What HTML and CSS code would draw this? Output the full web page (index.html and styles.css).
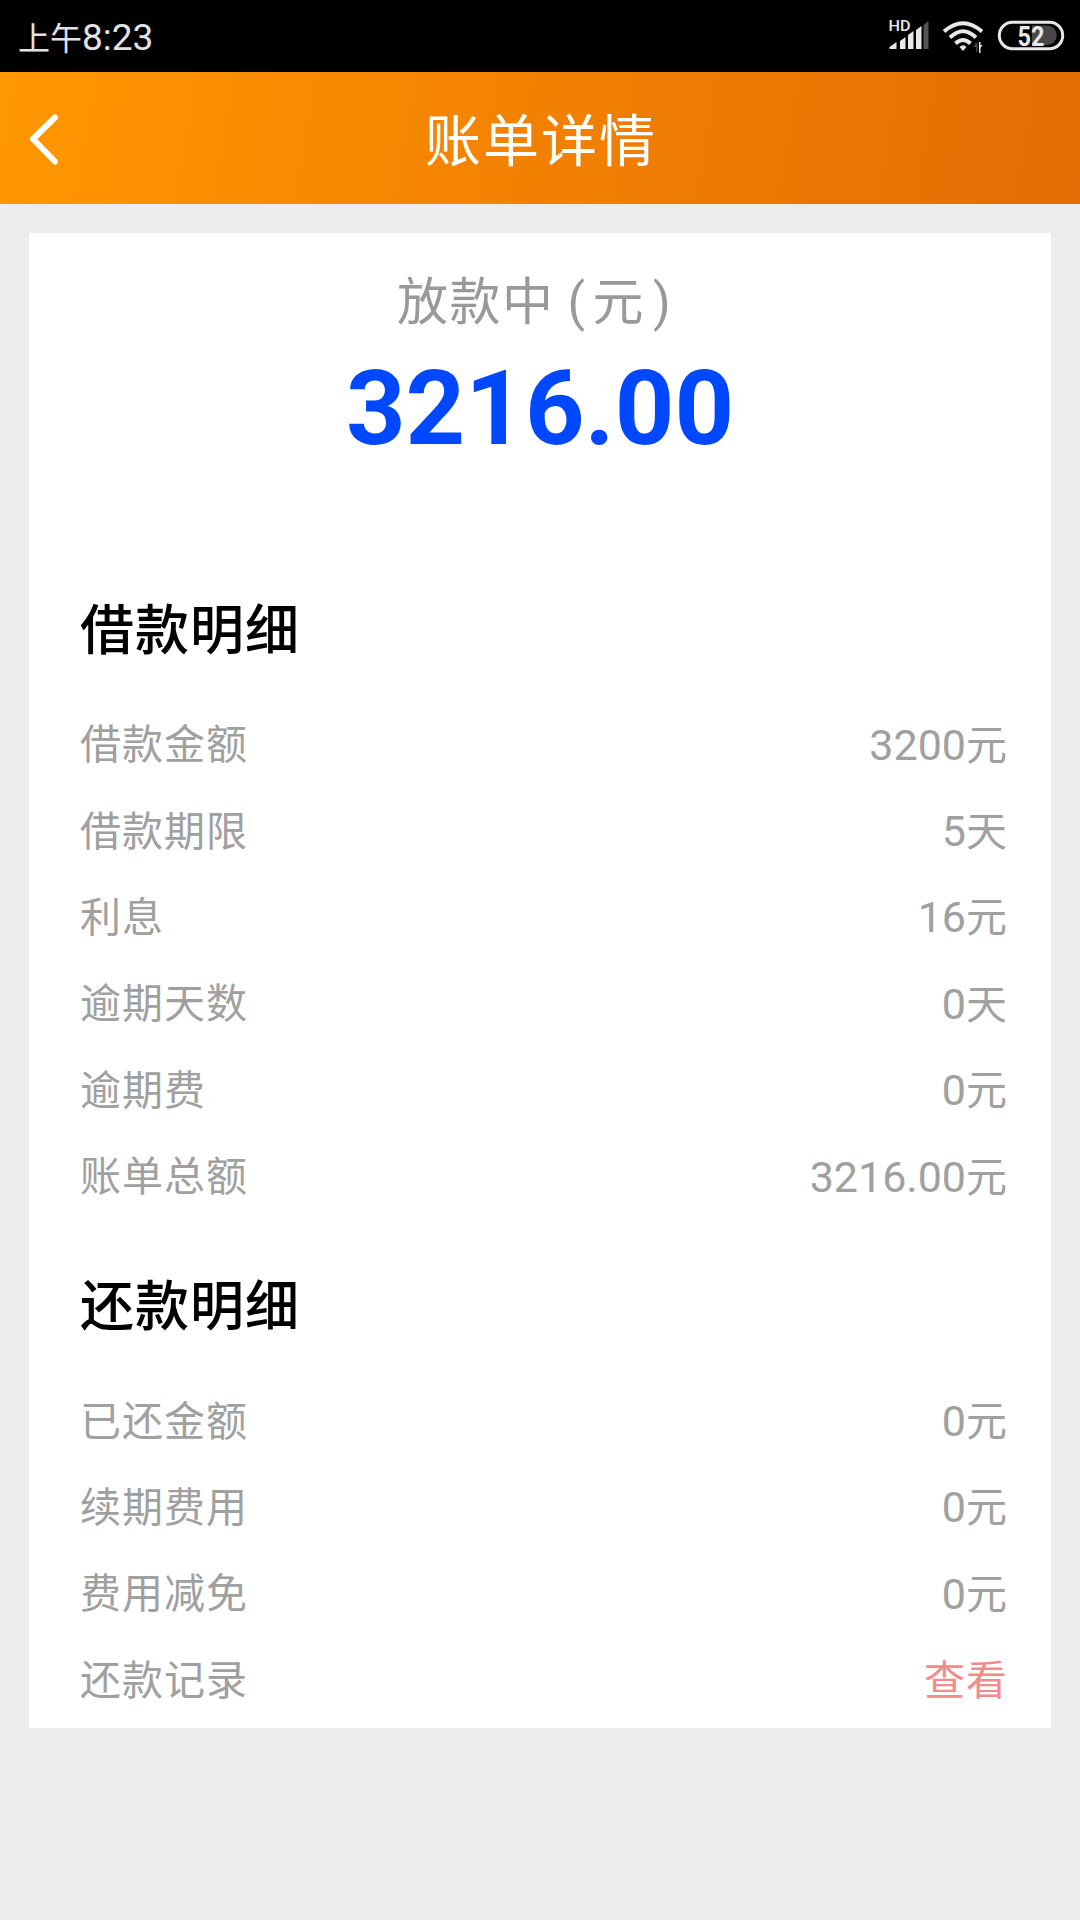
FILE: index.html
```html
<!DOCTYPE html>
<html lang="zh-CN">
<head>
    <meta charset="UTF-8">
    <meta name="viewport" content="width=device-width, initial-scale=1.0">
    <title>账单详情</title>
    <link rel="stylesheet" href="styles.css">
</head>
<body>
    <div class="status-bar">
        <div class="time"><span class="period">上午</span>8:23</div>
        <svg class="status-icons" width="180" height="40" viewBox="0 0 180 40">
            <!-- signal -->
            <text class="hd" x="0.5" y="15" textLength="22" lengthAdjust="spacingAndGlyphs">HD</text>
            <g fill="#e8e8e8">
                <path d="M1.500 33v-2l7-5v7z"/>
                <path d="M12 33V25l5.500-4v12z"/>
                <path d="M20 33V19l5.500-4v18z"/>
                <path d="M28 33V14l5.500-4v23z"/>
            </g>
            <path fill="#555" d="M35.500 33V9l5-4v28z"/>
            <!-- wifi -->
            <g fill="none" stroke="#e8e8e8" stroke-width="4">
                <path d="M56 15.500Q75 -1 94 15.500"/>
                <path d="M62 21.500Q75 9 88 21.500"/>
                <path d="M67.500 27.500Q75 20.500 82.500 27.500"/>
            </g>
            <path fill="#e8e8e8" d="M71.500 31q3.500-3.500 7 0l-3.500 4z"/>
            <path fill="#444" d="M85 31l3-4h1.500v9h-1.500v-5z"/>
            <path fill="#e8e8e8" d="M91 26h1.500v3h2L92.500 32v5H91z"/>
            <!-- battery -->
            <path fill="#484848" d="M144 9.500h15a9.500 9.500 0 0 1 0 19.500h-15z"/>
            <rect x="111.300" y="6.300" width="63.400" height="26.500" rx="13.200" fill="none" stroke="#e8e8e8" stroke-width="3"/>
            <text class="battery" x="129.500" y="29.500" textLength="27" lengthAdjust="spacingAndGlyphs">52</text>
        </svg>
    </div>

    <header class="nav-bar">
        <svg class="back" width="30" height="52" viewBox="0 0 30 52">
            <path d="M26 4.500L4 26L26 48.500"/>
        </svg>
        <h1>账单详情</h1>
    </header>

    <main class="card">
        <div class="summary">
            <div class="state">放款中<span class="paren">(</span>元<span class="paren paren-end">)</span></div>
            <div class="amount">3216.00</div>
        </div>

        <h2>借款明细</h2>
        <div class="row"><span class="label">借款金额</span><span class="value">3200<i>元</i></span></div>
        <div class="row"><span class="label">借款期限</span><span class="value">5<i>天</i></span></div>
        <div class="row"><span class="label">利息</span><span class="value">16<i>元</i></span></div>
        <div class="row"><span class="label">逾期天数</span><span class="value">0<i>天</i></span></div>
        <div class="row"><span class="label">逾期费</span><span class="value">0<i>元</i></span></div>
        <div class="row"><span class="label">账单总额</span><span class="value">3216.00<i>元</i></span></div>

        <h2>还款明细</h2>
        <div class="row"><span class="label">已还金额</span><span class="value">0<i>元</i></span></div>
        <div class="row"><span class="label">续期费用</span><span class="value">0<i>元</i></span></div>
        <div class="row"><span class="label">费用减免</span><span class="value">0<i>元</i></span></div>
        <div class="row"><span class="label">还款记录</span><a class="link">查看</a></div>
    </main>
</body>
</html>
```
FILE: styles.css
```css
* {
    box-sizing: border-box;
}

body {
    margin: 0;
    min-height: 1920px;
    background: #ededed;
    color: #000;
    font-family: Roboto, "Noto Sans CJK SC", sans-serif;
}

.status-bar {
    height: 72px;
    padding: 0 10px 0 18px;
    background: #000;
    display: flex;
    align-items: center;
    justify-content: space-between;
}

.time {
    color: #e2e2e2;
    font-size: 37px;
    line-height: 72px;
    padding-top: 4px;
}

.period {
    font-size: 32px;
}

.status-icons {
    margin-right: 2px;
}

.hd {
    font: 500 15px Roboto, sans-serif;
    fill: #e8e8e8;
}

.battery {
    font: 700 28px Roboto, sans-serif;
    fill: #e8e8e8;
}

.nav-bar {
    height: 132px;
    padding: 0 29px;
    background: linear-gradient(100deg, #ff9700, #e56b04);
    display: grid;
    grid-template-columns: 60px 1fr 60px;
    align-items: center;
}

.back {
    fill: none;
    stroke: #fff;
    stroke-width: 6;
    stroke-linecap: round;
    stroke-linejoin: round;
    margin-top: 2px;
}

h1 {
    margin: 0;
    padding: 9px 0 0 2px;
    color: #fff;
    font-size: 56px;
    font-weight: 400;
    letter-spacing: 2px;
    line-height: 123px;
    text-align: center;
}

.card {
    width: 1022px;
    height: 1495px;
    margin: 29px auto 0;
    padding: 0 43px 0 51px;
    background: #fff;
}

.summary {
    height: 311px;
    padding-top: 34px;
    margin-left: -8px;
    text-align: center;
}

.state {
    color: #999;
    font-size: 51px;
    font-weight: 400;
    letter-spacing: 1.500px;
    line-height: 72px;
}

.paren {
    display: inline-block;
    width: 38px;
    padding-left: 13px;
    letter-spacing: 0;
    text-align: left;
}

.paren-end {
    padding-left: 8px;
}

.amount {
    color: #0048ff;
    font-size: 104px;
    font-weight: 700;
    line-height: 140px;
}

h2 {
    height: 158px;
    margin: 0;
    font-size: 54px;
    font-weight: 500;
    letter-spacing: 1px;
    line-height: 176px;
}

.row {
    height: 86.400px;
    display: flex;
    justify-content: space-between;
    align-items: center;
    color: #a0a0a0;
    line-height: 86px;
}

.label,
.link,
.value i {
    font-size: 41px;
    font-style: normal;
    font-weight: 400;
    letter-spacing: 1px;
}

.value {
    font-size: 43px;
}

.link {
    color: #f38b8b;
}
```
